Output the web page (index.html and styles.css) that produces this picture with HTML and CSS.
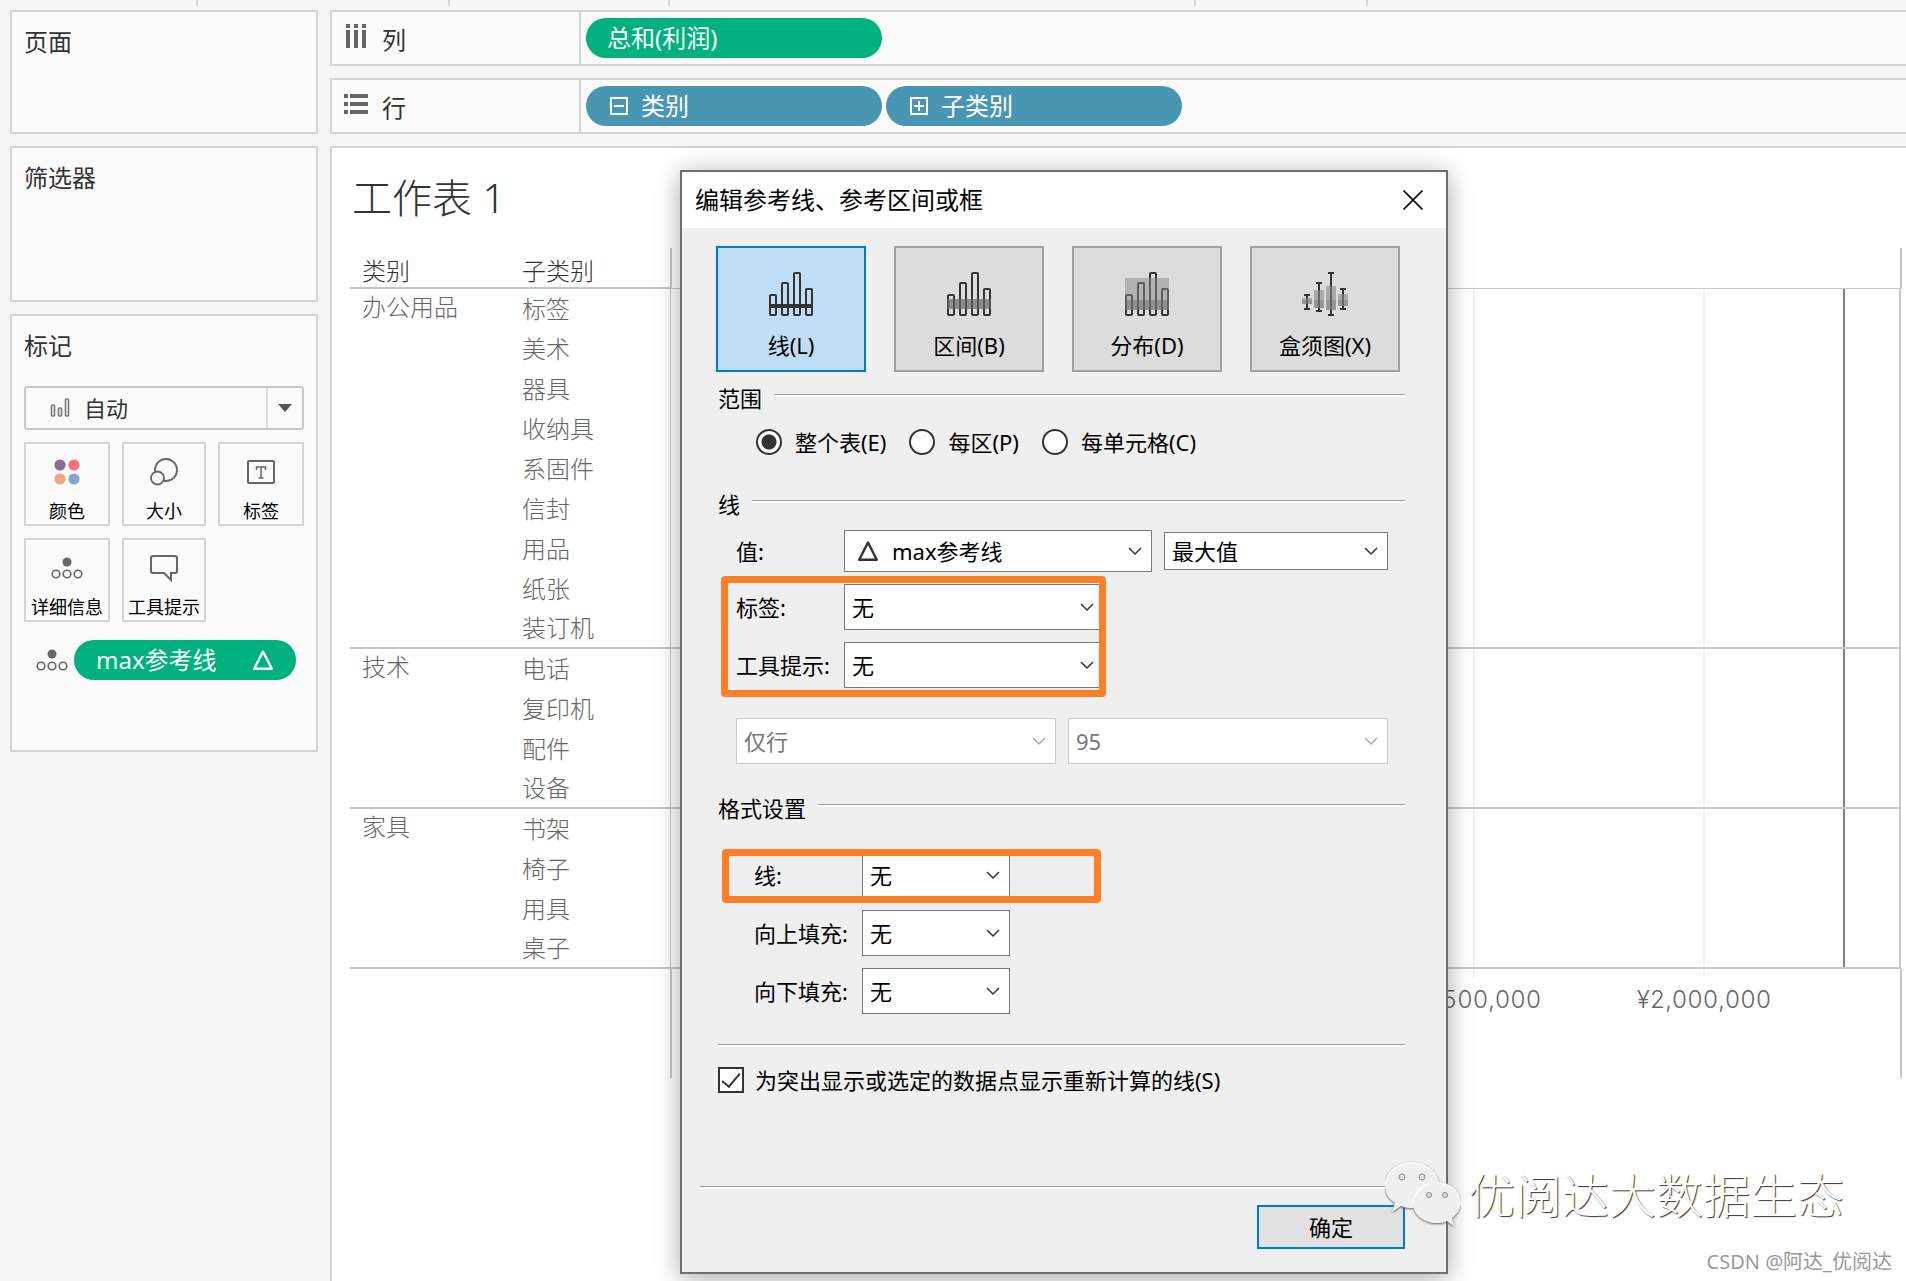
FILE: index.html
```html
<!DOCTYPE html>
<html lang="zh-CN">
<head>
<meta charset="utf-8">
<meta name="viewport" content="width=device-width, initial-scale=1">
<title>工作表 1</title>
<link rel="stylesheet" href="styles.css">
</head>
<body>
<svg class="defs" width="0" height="0" aria-hidden="true">
  <symbol id="chevron" viewBox="0 0 14 14"><path d="M1 4l6 6 6-6" fill="none" stroke="currentColor" stroke-width="1.5"/></symbol>
  <symbol id="detail" viewBox="0 0 32 22"><circle cx="16" cy="5" r="4.5" fill="#666"/><g fill="none" stroke="#666" stroke-width="1.6"><circle cx="5" cy="17" r="3.8"/><circle cx="16" cy="17" r="3.8"/><circle cx="27" cy="17" r="3.8"/></g></symbol>
  <symbol id="delta" viewBox="0 0 22 20"><path fill="none" stroke="currentColor" stroke-width="2.400" stroke-linejoin="round" d="M11 1.500L19.800 18.700H2.200z"/></symbol>
  <symbol id="bars" viewBox="0 0 44 44"><g fill="none" stroke="#333" stroke-width="2"><rect x="1" y="23" width="6" height="20" rx="1"/><rect x="13" y="11" width="6" height="32" rx="1"/><rect x="25" y="1" width="6" height="42" rx="1"/><rect x="37" y="17" width="6" height="26" rx="1"/></g></symbol>
</svg>

<div class="ruler" aria-hidden="true"><i></i><i></i><i></i><i></i><i></i></div>

<div class="workspace">
  <aside class="sidebar">
    <section class="card pages"><h2>页面</h2></section>
    <section class="card filters"><h2>筛选器</h2></section>
    <section class="card marks">
      <h2>标记</h2>
      <button class="mark-type" type="button">
        <svg width="20" height="20" viewBox="0 0 20 20" fill="none" stroke="#777" stroke-width="1.6"><rect x="1.500" y="7" width="3" height="11" rx="1"/><rect x="8.500" y="10" width="3" height="8" rx="1"/><rect x="15.500" y="1" width="3" height="17" rx="1"/></svg>
        <span>自动</span>
        <b><svg width="14" height="8" viewBox="0 0 14 8"><path fill="#555" d="M0 0h14L7 8z"/></svg></b>
      </button>
      <div class="mark-grid">
        <button type="button"><svg width="28" height="28" viewBox="0 0 28 28"><circle cx="7" cy="7" r="5.600" fill="#866e98"/><circle cx="21" cy="7" r="5.600" fill="#f77080"/><circle cx="7" cy="21" r="5.600" fill="#f3a67c"/><circle cx="21" cy="21" r="5.600" fill="#82a5cc"/></svg>颜色</button>
        <button type="button"><svg width="28" height="28" viewBox="0 0 28 28" fill="#fafafa" stroke="#666" stroke-width="1.800"><circle cx="16" cy="12" r="11"/><circle cx="7.500" cy="20" r="6.500"/></svg>大小</button>
        <button type="button"><svg width="28" height="28" viewBox="0 0 28 28" fill="none" stroke="#666"><rect x="1" y="3" width="26" height="22" rx="1" stroke-width="2"/><path stroke-width="1.500" d="M9.500 12V9h9v3M14 9v11M11.500 20h5"/></svg>标签</button>
        <button type="button"><svg width="32" height="22"><use href="#detail"/></svg>详细信息</button>
        <button type="button"><svg width="28" height="28" viewBox="0 0 28 28" fill="none" stroke="#666" stroke-width="2"><path d="M3 2h22a2 2 0 0 1 2 2v13a2 2 0 0 1-2 2h-4v7l-7-7H3a2 2 0 0 1-2-2V4a2 2 0 0 1 2-2z"/></svg>工具提示</button>
      </div>
      <div class="mark-field">
        <svg width="32" height="22"><use href="#detail"/></svg>
        <button class="pill green" type="button">max参考线<svg width="22" height="20"><use href="#delta"/></svg></button>
      </div>
    </section>
  </aside>

  <main class="content">
    <section class="shelf">
      <h2><svg height="24" viewBox="2 0 20 24" fill="#666"><path d="M2 0h4v4H2zM10 0h4v4h-4zM18 0h4v4h-4zM2 6h4v18H2zM10 6h4v18h-4zM18 6h4v18h-4z"/></svg>列</h2>
      <button class="pill green" type="button">总和(利润)</button>
    </section>
    <section class="shelf">
      <h2><svg height="20" viewBox="0 0 24 20" fill="#666"><path d="M0 0h4v4H0zM6 0h18v4H6zM0 8h4v4H0zM6 8h18v4H6zM0 16h4v4H0zM6 16h18v4H6z"/></svg>行</h2>
      <button class="pill blue" type="button"><svg width="20" height="20" viewBox="0 0 20 20" fill="none" stroke="#fff" stroke-width="2"><path d="M2 2h16v16H2zM5 10h10"/></svg>类别</button>
      <button class="pill blue" type="button"><svg width="20" height="20" viewBox="0 0 20 20" fill="none" stroke="#fff" stroke-width="2"><path d="M2 2h16v16H2zM5 10h10M10 5v10"/></svg>子类别</button>
    </section>

    <section class="sheet">
      <h1>工作表 1</h1>
      <div class="view">
        <table class="headers">
          <thead><tr><th scope="col">类别</th><th scope="col">子类别</th></tr></thead>
          <tbody>
            <tr><th rowspan="9" scope="rowgroup">办公用品</th><td>标签</td></tr>
            <tr><td>美术</td></tr><tr><td>器具</td></tr><tr><td>收纳具</td></tr><tr><td>系固件</td></tr><tr><td>信封</td></tr><tr><td>用品</td></tr><tr><td>纸张</td></tr><tr><td>装订机</td></tr>
          </tbody>
          <tbody>
            <tr><th rowspan="4" scope="rowgroup">技术</th><td>电话</td></tr>
            <tr><td>复印机</td></tr><tr><td>配件</td></tr><tr><td>设备</td></tr>
          </tbody>
          <tbody>
            <tr><th rowspan="4" scope="rowgroup">家具</th><td>书架</td></tr>
            <tr><td>椅子</td></tr><tr><td>用具</td></tr><tr><td>桌子</td></tr>
          </tbody>
        </table>
        <div class="chart">
          <div class="chart-head"></div>
          <div class="band tall"><i></i><i></i><i></i><i></i></div>
          <div class="band"><i></i><i></i><i></i><i></i></div>
          <div class="band"><i></i><i></i><i></i><i></i></div>
          <div class="axis"><span>¥1,500,000</span><span>¥2,000,000</span></div>
        </div>
      </div>
    </section>
  </main>
</div>

<form class="dialog" role="dialog" aria-labelledby="dialog-title">
  <header class="titlebar">
    <h2 id="dialog-title">编辑参考线、参考区间或框</h2>
    <button type="button" aria-label="关闭"><svg width="20" height="20" viewBox="0 0 20 20"><path d="M0.500 0.500l19 19M19.500 0.500l-19 19" stroke="#111" stroke-width="1.800"/></svg></button>
  </header>
  <div class="dialog-body">
    <div class="modes">
      <button class="active" type="button"><svg width="44" height="44"><use href="#bars"/><path fill="#333" d="M0 32h44v4H0z"/></svg>线(L)</button>
      <button type="button"><svg width="44" height="44"><use href="#bars"/><path fill="#666" fill-opacity=".68" d="M0 27h44v10H0z"/></svg>区间(B)</button>
      <button type="button"><svg width="44" height="44"><use href="#bars"/><path fill="#888" fill-opacity=".5" d="M0 6h44v32H0z"/><path fill="#666" fill-opacity=".45" d="M0 28h44v10H0z"/></svg>分布(D)</button>
      <button type="button"><svg width="46" height="44" viewBox="0 0 46 44"><path fill="none" stroke="#333" stroke-width="2" d="M2 23h6M5 23v14M2 37h6M14 11h6M17 11v28M14 39h6M26 1h6M29 1v42M26 43h6M38 17h6M41 17v20M38 37h6"/><path fill="#888" fill-opacity=".6" d="M0 26h10v6H0zM12 18h10v18H12zM24 14h10v24H24zM36 22h10v12H36z"/><path fill="#666" fill-opacity=".3" d="M0 28h10v4H0zM12 28h10v8H12zM24 28h10v10H24zM36 28h10v6H36z"/></svg>盒须图(X)</button>
    </div>

    <h3 class="section scope">范围</h3>
    <div class="radios">
      <label><input type="radio" name="scope" checked>整个表(E)</label>
      <label><input type="radio" name="scope">每区(P)</label>
      <label><input type="radio" name="scope">每单元格(C)</label>
    </div>

    <h3 class="section line">线</h3>
    <div class="row value-row">
      <label for="value">值:</label>
      <div class="select value">
        <select id="value"><option>max参考线</option></select>
        <svg class="lead" width="22" height="20"><use href="#delta"/></svg>
        <svg class="chev" width="14" height="14"><use href="#chevron"/></svg>
      </div>
      <div class="select aggregate">
        <select aria-label="聚合"><option>最大值</option></select>
        <svg class="chev" width="14" height="14"><use href="#chevron"/></svg>
      </div>
    </div>
    <div class="marked labels">
      <div class="row">
        <label for="label">标签:</label>
        <div class="select medium"><select id="label"><option>无</option></select><svg class="chev" width="14" height="14"><use href="#chevron"/></svg></div>
      </div>
      <div class="row">
        <label for="tooltip">工具提示:</label>
        <div class="select medium"><select id="tooltip"><option>无</option></select><svg class="chev" width="14" height="14"><use href="#chevron"/></svg></div>
      </div>
    </div>
    <div class="row disabled-row">
      <div class="select"><select disabled aria-label="计算"><option>仅行</option></select><svg class="chev" width="14" height="14"><use href="#chevron"/></svg></div>
      <div class="select"><select disabled aria-label="置信区间"><option>95</option></select><svg class="chev" width="14" height="14"><use href="#chevron"/></svg></div>
    </div>

    <h3 class="section format">格式设置</h3>
    <div class="format-rows">
      <div class="marked single">
        <div class="row">
          <label for="line">线:</label>
          <div class="select small"><select id="line"><option>无</option></select><svg class="chev" width="14" height="14"><use href="#chevron"/></svg></div>
        </div>
      </div>
      <div class="row">
        <label for="above">向上填充:</label>
        <div class="select small"><select id="above"><option>无</option></select><svg class="chev" width="14" height="14"><use href="#chevron"/></svg></div>
      </div>
      <div class="row">
        <label for="below">向下填充:</label>
        <div class="select small"><select id="below"><option>无</option></select><svg class="chev" width="14" height="14"><use href="#chevron"/></svg></div>
      </div>
    </div>

    <hr>
    <label class="recalc"><input type="checkbox" checked>为突出显示或选定的数据点显示重新计算的线(S)</label>
    <hr class="wide">
    <div class="actions"><button type="submit">确定</button></div>
  </div>
</form>

<div class="watermark">
  <svg width="76" height="68" viewBox="0 0 76 68">
    <g class="bubbles" fill="#fff" fill-opacity=".9">
      <path d="M27 1C12 1 0 11 0 24c0 8 4 14 10 18l-3 9 9-6c4 2 8 2 12 2h1c-3-12 9-25 25-26C51 9 40 1 27 1z"/>
      <path d="M52 21c-13 0-24 9-24 21s11 20 24 20c4 0 7 0 10-2l7 5-2-8c5-4 9-9 9-15 0-12-11-21-24-21z"/>
    </g>
    <g fill="#ddd" stroke="#888"><circle cx="17" cy="16" r="3"/><circle cx="37" cy="16" r="3"/><circle cx="44" cy="34" r="2.500"/><circle cx="60" cy="34" r="2.500"/></g>
  </svg>
  <span>优阅达大数据生态</span>
</div>
<div class="credit">CSDN @阿达_优阅达</div>
</body>
</html>
```
FILE: styles.css
```css
*, *::before, *::after { box-sizing: border-box; }

body {
  margin: 0;
  min-height: 100vh;
  display: flex;
  flex-direction: column;
  position: relative;
  overflow: hidden;
  background: #f5f5f5;
  color: #333;
  font-family: "Noto Sans", "Noto Sans CJK SC", sans-serif;
  font-size: 24px;
}

h1, h2, h3 { margin: 0; font-weight: 400; font-size: 24px; }
button, select, input { font: inherit; color: inherit; margin: 0; }
button { padding: 0; }
svg { flex: none; }
.defs { position: absolute; }

/* Toolbar separators above the shelves */
.ruler {
  height: 10px;
  display: grid;
  grid-template-columns: 198px 252px 220px 526px 172px;
}
.ruler i { height: 6px; border-right: 2px solid #d4d4d4; }

.workspace { flex: 1; display: flex; gap: 12px; padding-left: 10px; }
.sidebar { width: 308px; flex: none; display: flex; flex-direction: column; gap: 12px; }
.card { border: 2px solid #d4d4d4; background: #fafafa; padding: 14px 12px; line-height: 32px; }
.pages { height: 124px; }
.filters { height: 156px; }
.marks { height: 438px; }

.mark-type {
  width: 100%;
  height: 44px;
  margin-top: 24px;
  padding-left: 24px;
  display: flex;
  align-items: center;
  border: 2px solid #c8c8c8;
  border-radius: 3px;
  background: #fafafa;
  font-size: 22px;
  line-height: 40px;
}
.mark-type span { flex: 1; text-align: left; padding-left: 14px; }
.mark-type b { width: 36px; height: 40px; border-left: 2px solid #ddd; display: grid; place-items: center; }

.mark-grid { display: grid; grid-template-columns: 86px 84px 86px; gap: 12px; margin-top: 12px; }
.mark-grid button {
  height: 84px;
  display: grid;
  grid-template-rows: 56px 22px;
  align-content: start;
  place-items: center;
  border: 2px solid #d4d4d4;
  background: #fafafa;
  color: #000;
  font-size: 18px;
  line-height: 22px;
}
.mark-field { display: flex; align-items: center; gap: 6px; margin: 18px 8px 0 12px; }
.mark-field .pill { flex: 1; padding: 0 22px; justify-content: space-between; }

.pill {
  height: 40px;
  display: flex;
  align-items: center;
  gap: 12px;
  padding: 0 21px;
  border: 0;
  border-radius: 20px;
  color: #fff;
  line-height: 40px;
}
.green { background: #00b180; }
.blue { background: #4996b2; padding: 0 23px; }

.content { flex: 1; min-width: 0; display: flex; flex-direction: column; gap: 12px; }
.shelf {
  height: 56px;
  display: flex;
  align-items: center;
  gap: 4px;
  border: 2px solid #d4d4d4;
  border-right: 0;
  background: #fafafa;
}
.shelf h2 {
  width: 249px;
  height: 52px;
  padding-left: 12px;
  display: flex;
  align-items: center;
  gap: 14px;
  border-right: 2px solid #d4d4d4;
}
.shelf h2 svg { width: 24px; margin-bottom: 4px; }
.shelf .pill { width: 296px; }
.shelf h2 + .pill { margin-left: 1px; }

.sheet {
  flex: 1;
  border: 2px solid #d4d4d4;
  border-width: 2px 0 0 2px;
  background: #fff;
  padding: 20px 4px 0 18px;
}
.sheet h1 { padding-left: 2px; font-size: 40px; font-weight: 300; line-height: 60px; }
.view { display: flex; margin-top: 20px; font-weight: 300; }

.headers { width: 320px; flex: none; align-self: flex-start; border-collapse: collapse; line-height: 32px; color: #666; }
.headers th, .headers td { padding: 1px 0 0 12px; height: 40px; font-weight: 300; text-align: left; vertical-align: middle; }
.headers th { width: 160px; padding-top: 2px; vertical-align: top; }
.headers thead th { color: #333; padding-top: 7px; }
.headers thead, .headers tbody { border-bottom: 2px solid #c4c4c4; }

.chart { flex: 1; display: flex; flex-direction: column; }
.chart-head { height: 41px; border: 2px solid #c8c8c8; border-width: 0 2px 1px; }
.band {
  height: 160px;
  margin-right: 1px;
  display: grid;
  grid-template-columns: 1fr 230px 140px 56px;
  border: 1px solid #c8c8c8;
  border-width: 0 2px 2px 1px;
}
.tall { height: 360px; }
.band i + i { border-left: 2px solid #f0f0f0; }
.band i:last-child { border-color: #808080; }
.axis {
  height: 109px;
  display: flex;
  justify-content: flex-end;
  padding-right: 81px;
  border: 2px solid #c8c8c8;
  border-width: 0 2px;
  color: #666;
  font-family: Inter, "Noto Sans", sans-serif;
  font-variant-numeric: tabular-nums;
  line-height: 38px;
}
.axis span { width: 230px; text-align: center; }
.axis span::before { content: ""; display: block; width: 2px; height: 8px; margin: 0 auto 4px; background: #f0f0f0; }

/* Reference line dialog floats over the worksheet */
.dialog {
  position: absolute;
  left: 680px;
  top: 170px;
  width: 768px;
  border: 2px solid #6e6e6e;
  background: #efefef;
  box-shadow: 0 4px 24px rgba(0, 0, 0, .35);
  color: #000;
  font-size: 22px;
  line-height: 28px;
}
.titlebar { height: 56px; display: flex; align-items: center; justify-content: space-between; padding: 0 23px 0 13px; background: #fff; }
.titlebar button { width: 20px; height: 20px; border: 0; background: none; display: flex; }
.dialog-body { padding: 18px 41px 23px 34px; display: flex; flex-direction: column; }

.modes { display: flex; gap: 28px; }
.modes button {
  width: 150px;
  height: 126px;
  padding-top: 24px;
  display: flex;
  flex-direction: column;
  align-items: center;
  gap: 15px;
  border: 2px solid #a0a0a0;
  background: #dcdcdc;
}
.modes .active { border-color: #0078d7; background: #bfddf5; }

.section { display: flex; gap: 12px; padding-left: 2px; font-size: 22px; line-height: 26px; height: 28px; }
.section::after { content: ""; flex: 1; height: 3px; margin-top: 9px; border-top: 1px solid #a0a0a0; background: #fff; }
.scope { margin-top: 13px; }
.line { margin-top: 35px; }
.format { margin-top: 31px; }

.radios { display: flex; gap: 23px; margin: 15px 0 0 40px; }
.radios label { display: flex; align-items: center; gap: 13px; }
.radios input { appearance: none; width: 26px; height: 26px; border: 2px solid #333; border-radius: 50%; background: #fff; }
.radios input:checked { background: radial-gradient(circle, #333 7px, #fff 8px); }

.row { display: flex; align-items: center; padding-left: 20px; }
.row > label { width: 108px; flex: none; }
.value-row { margin-top: 11px; }
.select { display: grid; align-items: center; height: 46px; }
.select > * { grid-area: 1 / 1; }
.select select {
  appearance: none;
  width: 100%;
  height: 100%;
  padding: 0 32px 0 7px;
  border: 1px solid #7a7a7a;
  border-radius: 0;
  background: #fff;
  color: #000;
  opacity: 1;
}
.chev { justify-self: end; margin-right: 10px; color: #333; pointer-events: none; }
.lead { margin-left: 13px; color: #333; pointer-events: none; }
.value { width: 308px; height: 42px; }
.value select { padding-left: 47px; }
.aggregate { width: 224px; height: 38px; margin-left: 12px; }
.medium { width: 260px; }
.small { width: 148px; }
.disabled-row { gap: 12px; margin-top: 30px; }
.disabled-row .select { width: 320px; }
.disabled-row .select select { border-color: #ccc; color: #777; }
.disabled-row .chev { color: #aaa; }

/* Orange callout frames */
.marked { position: relative; }
.marked::after { content: ""; position: absolute; border: 7px solid #ff7f27; border-radius: 4px; pointer-events: none; }
.labels { display: flex; flex-direction: column; gap: 12px; margin-top: 12px; }
.labels::after { left: 5px; top: -8px; width: 385px; height: 121px; }
.single::after { left: 6px; top: -3px; width: 379px; height: 54px; }

.format-rows { display: flex; flex-direction: column; gap: 12px; margin-top: 29px; }
.format-rows .row { padding-left: 38px; }

hr { width: 687px; height: 3px; margin: 30px 0 0 2px; border: 0; border-top: 1px solid #a0a0a0; background: #fff; }
.recalc { display: flex; align-items: center; gap: 11px; margin: 19px 0 0 2px; }
.recalc input { appearance: none; width: 26px; height: 26px; border: 2px solid #333; background: #fff; display: grid; place-items: center; }
.recalc input:checked::after { content: ""; width: 10px; height: 18px; margin-bottom: 5px; border: solid #333; border-width: 0 2px 2px 0; transform: rotate(40deg); }
.wide { width: auto; margin: 92px -23px 0 -16px; }
.actions { display: flex; justify-content: flex-end; margin-top: 16px; }
.actions button { width: 148px; height: 44px; border: 2px solid #0078d7; background: #e1e1e1; }

/* Watermarks over the lower right corner */
.watermark {
  position: absolute;
  right: 62px;
  bottom: 52px;
  display: flex;
  align-items: center;
  gap: 7px;
  color: #fff;
  font-size: 47px;
  font-weight: 300;
  line-height: 68px;
  text-shadow: 1px 1px 1px #333;
}
.bubbles { filter: drop-shadow(0 1px 1px #555); }
.credit {
  position: absolute;
  right: 14px;
  bottom: 5px;
  color: #999;
  font-size: 20px;
  line-height: 28px;
}
```
